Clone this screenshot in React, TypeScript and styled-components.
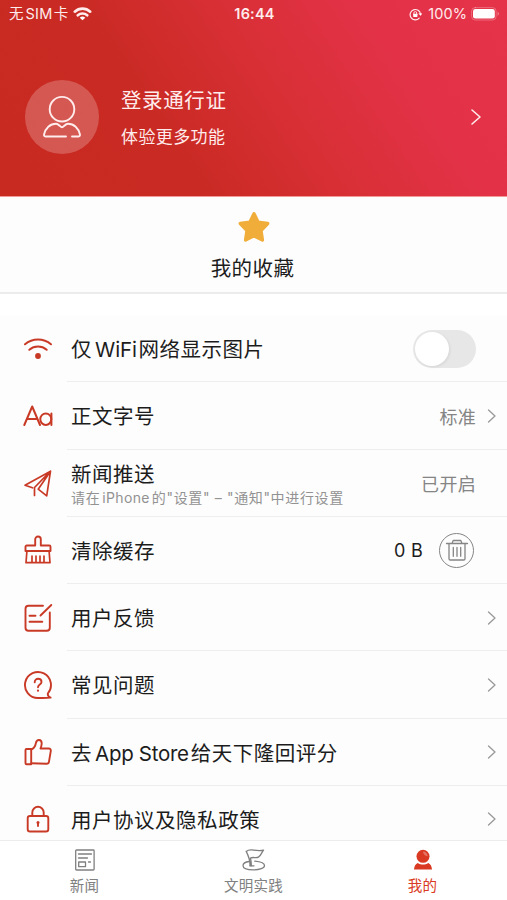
import React from 'react';
import styled, { createGlobalStyle } from 'styled-components';

const GlobalStyle = createGlobalStyle`
  * { box-sizing: border-box; }
  body { margin: 0; background: #fff; }
`;

const Screen = styled.div`
  width: 507px;
  height: 900px;
  overflow: hidden;
  display: flex;
  flex-direction: column;
  background: #fff;
  color: #1c1c1c;
  font-family: Inter, 'Noto Sans CJK SC', sans-serif;
  white-space: nowrap;
`;

const Header = styled.header`
  flex: none;
  height: 196px;
  color: #ffecec;
  background: linear-gradient(56deg, #c82a21 0%, #c92a23 32%, #d82f35 54%, #e33248 77%, #e5334a 100%);
`;

const StatusBar = styled.div`
  height: 28px;
  display: grid;
  grid-template-columns: 1fr auto 1fr;
  align-items: center;
  padding: 0 7px 0 9px;
  font-size: 14.5px;
  line-height: 28px;
`;

const StatusSide = styled.div<{ $end?: boolean }>`
  display: flex;
  align-items: center;
  justify-content: ${(p) => (p.$end ? 'flex-end' : 'flex-start')};
  gap: 5px;
`;

const BatteryLevel = styled.span`
  margin: 0 -1px 0 1px;
  letter-spacing: 0.1px;
`;

const Clock = styled.span`
  font-weight: 600;
  font-size: 14.5px;
  letter-spacing: 0.2px;
`;

const Profile = styled.div`
  height: 173px;
  display: flex;
  align-items: center;
  padding: 5px 25px 0;
`;

const Avatar = styled.div`
  width: 74px;
  height: 74px;
  border-radius: 50%;
  background: rgba(255, 255, 255, 0.22);
  display: flex;
  align-items: center;
  justify-content: center;
`;

const ProfileText = styled.div`
  flex: 1;
  margin-left: 22px;
  padding-top: 3px;
`;

const ProfileTitle = styled.div`
  font-size: 20.5px;
  letter-spacing: 0.6px;
  line-height: 36px;
`;

const ProfileHint = styled.div`
  font-size: 17px;
  letter-spacing: 0.4px;
  line-height: 36px;
`;

const Favorites = styled.section`
  flex: none;
  height: 98px;
  padding-top: 14px;
  display: flex;
  flex-direction: column;
  align-items: center;
  background: #fdfdfd;
  border-top: 1px solid #f29a9a;
  border-bottom: 2px solid #ececec;
`;

const FavoritesLabel = styled.div`
  font-size: 20.5px;
  letter-spacing: 0.4px;
  line-height: 30px;
  margin-top: 11px;
  margin-right: 2px;
`;

const List = styled.main`
  flex: none;
  height: 525px;
  margin-top: 21px;
  overflow: hidden;
  background: #fdfdfd;
`;

const Row = styled.div`
  height: 67.25px;
  display: flex;
  align-items: stretch;
`;

const IconCell = styled.div`
  width: 67px;
  padding-left: 8px;
  display: flex;
  align-items: center;
  justify-content: center;
  color: #c93a26;
`;

const RowBody = styled.div`
  flex: 1;
  display: flex;
  align-items: center;
  padding: 1px 11.5px 0 4px;
  border-bottom: 1px solid #eeeeee;
`;

const RowText = styled.div`
  flex: 1;
  padding-top: 3px;
`;

const Label = styled.div`
  font-size: 20.5px;
  letter-spacing: 0.52px;
  line-height: 28px;
`;

const Hint = styled.div`
  font-size: 14px;
  letter-spacing: 0.65px;
  line-height: 20px;
  margin-top: -1px;
  color: #929292;
`;

const Latin = styled.span<{ $track: number; $before?: number; $after?: number }>`
  letter-spacing: ${(p) => p.$track}px;
  margin-left: ${(p) => p.$before ?? 0}px;
  margin-right: ${(p) => p.$after ?? 0}px;
`;

const Value = styled.span<{ $gap?: number; $dark?: boolean }>`
  font-size: 18px;
  letter-spacing: 0.3px;
  color: ${(p) => (p.$dark ? '#1c1c1c' : '#858585')};
  margin-right: ${(p) => p.$gap ?? 0}px;
`;

const Toggle = styled.div`
  width: 63px;
  height: 38px;
  border-radius: 19px;
  background: #e7e7e7;
  padding: 2px;
  margin-right: 19.5px;
`;

const Knob = styled.div`
  width: 34px;
  height: 34px;
  border-radius: 50%;
  background: #fff;
  box-shadow: 1px 1px 3px rgba(0, 0, 0, 0.08);
`;

const TrashButton = styled.div`
  width: 35px;
  height: 35px;
  border: 1.5px solid #858585;
  border-radius: 50%;
  display: flex;
  align-items: center;
  justify-content: center;
  margin-right: 21.5px;
  color: #858585;
`;

const TabBar = styled.nav`
  flex: none;
  height: 60px;
  display: grid;
  grid-template-columns: repeat(3, 169px);
  background: #fff;
  border-top: 1px solid #ececec;
`;

const Tab = styled.div<{ $active?: boolean }>`
  display: flex;
  flex-direction: column;
  align-items: center;
  padding-top: 7px;
  font-size: 14.5px;
  letter-spacing: 0.2px;
  line-height: 22px;
  color: ${(p) => (p.$active ? '#da3a22' : '#808080')};
  svg { margin-bottom: 3px; }
`;

const Svg = styled.svg`
  display: block;
  flex: none;
  fill: none;
  stroke: currentColor;
  stroke-linecap: round;
  stroke-linejoin: round;
`;

const RowChevron = styled(Svg)`
  color: #999;
`;

const Chevron = () => (
  <RowChevron width="9" height="16" viewBox="0 0 9 16" strokeWidth="1.3">
    <path d="M1.5 2l6.5 6-6.5 6" />
  </RowChevron>
);

const ProfileChevron = () => (
  <Svg width="12" height="18" viewBox="0 0 12 18" strokeWidth="1.6">
    <path d="M2 2l8 7-8 7" />
  </Svg>
);

const WifiStatusIcon = () => (
  <Svg width="19" height="14" viewBox="0 0 19 14" strokeWidth="2.6">
    <path d="M1.8 4.7a11.3 11.3 0 0 1 15.4 0M4.8 8.3a7 7 0 0 1 9.4 0" />
    <path d="M9.5 13.2L6.7 10.8a4.2 4.2 0 0 1 5.6 0z" fill="#fff" stroke="none" />
  </Svg>
);

const LockRotationIcon = () => (
  <Svg width="13" height="13" viewBox="0 0 13 13" strokeWidth="1.2">
    <path d="M10.2 10.2a5.2 5.2 0 1 1 1.3-4" />
    <path d="M10 5.8l1.5 1.8 1.3-1.8z" fill="#fff" strokeWidth=".5" />
    <path d="M4.9 6V5a1.4 1.4 0 0 1 2.8 0v1" strokeWidth=".9" />
    <rect x="4.2" y="5.8" width="4.2" height="3.2" rx=".4" fill="#fff" stroke="none" />
  </Svg>
);

const BatteryIcon = () => (
  <Svg width="29" height="14" viewBox="0 0 29 14">
    <rect x=".6" y=".6" width="24.5" height="12.4" rx="3.6" strokeOpacity=".3" />
    <rect x="2" y="2" width="21.8" height="9.6" rx="2.4" fill="#fff" stroke="none" />
    <path d="M26.6 4.8c1.7.6 1.7 3.4 0 4z" fill="#fff" fillOpacity=".4" stroke="none" />
  </Svg>
);

const AvatarIcon = () => (
  <Svg width="42" height="44" viewBox="0 0 42 44" strokeWidth="1.9">
    <circle cx="21" cy="14.2" r="12.3" />
    <path d="M25 41.5H4.500c-1.300 0-1.700-.9-1.400-2.200C4.500 33.200 9 28.700 15 28.700c2.700 0 4.300 3.600 6 3.600s3.300-3.600 6-3.600c6 0 10.500 4.500 11.900 10.600.3 1.300-.1 2.200-1.400 2.200h-6.500" />
  </Svg>
);

const StarIcon = () => (
  <Svg width="34" height="32" viewBox="0 0 34 32">
    <path d="M17 2.700l4 8.400 9.700 1.400-6.700 7 1.400 9.500-8.400-4.200-8.400 4.200 1.400-9.500-6.700-7 9.700-1.400z" fill="#f1ad3a" stroke="#f1ad3a" strokeWidth="3.400" />
  </Svg>
);

const WifiIcon = () => (
  <Svg width="30" height="30" viewBox="0 0 30 30" strokeWidth="2">
    <path d="M2 10.300a20 20 0 0 1 26 0M6.300 15.800a13.500 13.500 0 0 1 17.400 0" />
    <circle cx="15" cy="22" r="2.900" fill="currentColor" stroke="none" />
  </Svg>
);

const LetterIcon = () => (
  <Svg width="30" height="30" viewBox="0 0 30 30" strokeWidth="2">
    <path d="M1.300 24L9.200 5.500 17 24M4.200 18h9.900M28.400 12.500V24" />
    <ellipse cx="22.800" cy="18.200" rx="5.500" ry="5.700" />
  </Svg>
);

const PlaneIcon = () => (
  <Svg width="30" height="30" viewBox="0 0 30 30" strokeWidth="1.700">
    <path d="M27.500 3.200L2 17.200l7.500 2.600M27.500 3.200L23.700 27.800 15.200 21.200 27.500 3.200 11.500 19.500v8" />
  </Svg>
);

const BroomIcon = () => (
  <Svg width="30" height="30" viewBox="0 0 30 30" strokeWidth="1.900">
    <path d="M12.200 10.500V4.300a2.800 2.800 0 0 1 5.600 0v6.200h8.500a1.200 1.200 0 0 1 1.200 1.200v4.300H2.500v-4.300a1.200 1.200 0 0 1 1.200-1.200z" />
    <path d="M3.900 16.300L3 27.700h24L26.100 16.300M9 21v6M13 21v6M17 21v6M21 21v6" strokeWidth="1.700" />
  </Svg>
);

const FeedbackIcon = () => (
  <Svg width="30" height="30" viewBox="0 0 30 30" strokeWidth="1.900">
    <path d="M20 2.700H5.500a3 3 0 0 0-3 3v19a3 3 0 0 0 3 3h18.300a3 3 0 0 0 3-3V9.500M28.300 2L17.500 12.500M6.500 12.800h6M6.500 18.700h12.800" />
  </Svg>
);

const QuestionIcon = () => (
  <Svg width="30" height="30" viewBox="0 0 30 30" strokeWidth="1.900">
    <path d="M15 28a13 13 0 1 1 9.800-4.500c-.2 2 .6 3.300 2.800 4.100-3.500.6-8.600.4-12.600.4z" />
    <path d="M11.700 12.200c0-4.700 6.800-4.300 6.800-.3 0 2.700-3.500 2.600-3.500 5.400" />
    <circle cx="15" cy="20.700" r="1.100" fill="currentColor" stroke="none" />
  </Svg>
);

const ThumbIcon = () => (
  <Svg width="30" height="30" viewBox="0 0 30 30" strokeWidth="1.900">
    <path d="M2.500 13a1 1 0 0 1 1-1h4.700v15.200H3.500a1 1 0 0 1-1-1z" />
    <path d="M8.200 12.500c3.500-1 4.300-4.200 4.800-6.700.8-4 5.700-3.800 5.700.5 0 2.200-.5 3.500-1.200 5.200h8.300a2 2 0 0 1 2 2.300l-1.800 10.900c-.2 1.300-1 2-2.300 2L8.200 26.200" />
  </Svg>
);

const LockIcon = () => (
  <Svg width="30" height="30" viewBox="0 0 30 30" strokeWidth="1.900">
    <rect x="4.700" y="12" width="20.600" height="15.500" rx="2.300" />
    <path d="M9.300 12V8.500a5.700 5.700 0 0 1 11.400 0V12M15 19.300v2.700" />
    <circle cx="15" cy="18.600" r="1.500" fill="currentColor" stroke="none" />
  </Svg>
);

const TrashIcon = () => (
  <Svg width="24" height="24" viewBox="0 0 24 24" strokeWidth="1.300">
    <path d="M1.500 5.500h21M7 5.500l1.200-3h7.600l1.200 3M4 5.800v14.900c0 .8.500 1.300 1.300 1.300h13.400c.8 0 1.300-.5 1.300-1.300V5.800M8.300 9.500v8.800M12 9.500v8.800M15.700 9.500v8.800" />
  </Svg>
);

const NewsIcon = () => (
  <Svg width="24" height="24" viewBox="0 0 24 24" strokeWidth="1.300">
    <rect x="2.700" y="2" width="18.400" height="20" rx=".8" />
    <path d="M5.500 6h13M5.500 10h9M5.700 14h6.800v4.700H5.700zM15.500 14h2" />
  </Svg>
);

const FlagIcon = () => (
  <Svg width="26" height="24" viewBox="0 0 26 24" strokeWidth="1.300">
    <path d="M5.200 3.400c4.500-4 9 .8 17.400-1.300-2.200 2.300-2.200 5.300-5.200 7-2.700 1.500-4.900-.6-8 1M5.200 3.400c2.300 4.500 4 9 3.800 14.300M9.400 10.100c.8 2.700 1 5 .9 7.600" />
    <path d="M8.300 13.500C4 14 2 15.600 2 17.500c0 2.600 4.300 4.400 10.500 4.400s11-1.800 11-4.400c0-2.300-3.700-3.900-9.700-4.400M9 17.800h4" />
  </Svg>
);

const PersonIcon = () => (
  <Svg width="24" height="24" viewBox="0 0 24 24">
    <circle cx="12" cy="8.300" r="6.500" fill="currentColor" stroke="none" />
    <path d="M6.800 14.900c3 2.100 7.400 2.100 10.400 0 2.200.9 3.600 3.200 3.800 6.600H3c.2-3.400 1.600-5.700 3.800-6.600z" fill="currentColor" stroke="none" />
    <path d="M12 3.500a4.700 4.700 0 0 1 4.700 4.700c-2.700 0-4.700-2-4.700-4.700z" fill="#fff" fillOpacity=".3" stroke="none" />
  </Svg>
);

interface Item {
  icon: React.ReactNode;
  label: React.ReactNode;
  hint?: React.ReactNode;
  end: React.ReactNode;
}

const items: Item[] = [
  {
    icon: <WifiIcon />,
    label: <>仅<Latin $track={-0.1} $before={3} $after={1.5}>WiFi</Latin>网络显示图片</>,
    end: <Toggle><Knob /></Toggle>,
  },
  { icon: <LetterIcon />, label: '正文字号', end: <><Value $gap={10.5}>标准</Value><Chevron /></> },
  {
    icon: <PlaneIcon />,
    label: '新闻推送',
    hint: <>请在<Latin $track={0.35} $before={2} $after={2}>iPhone</Latin>的"设置" – "通知"中进行设置</>,
    end: <Value $gap={19.5}>已开启</Value>,
  },
  { icon: <BroomIcon />, label: '清除缓存', end: <><Value $dark $gap={16}>0 B</Value><TrashButton><TrashIcon /></TrashButton></> },
  { icon: <FeedbackIcon />, label: '用户反馈', end: <Chevron /> },
  { icon: <QuestionIcon />, label: '常见问题', end: <Chevron /> },
  {
    icon: <ThumbIcon />,
    label: <>去<Latin $track={-0.3} $before={3} $after={2}>App Store</Latin>给天下隆回评分</>,
    end: <Chevron />,
  },
  { icon: <LockIcon />, label: '用户协议及隐私政策', end: <Chevron /> },
];

export default function App() {
  return (
    <Screen>
      <GlobalStyle />
      <Header>
        <StatusBar>
          <StatusSide><span>无<Latin $track={0.3} $before={2} $after={1}>SIM</Latin>卡</span><WifiStatusIcon /></StatusSide>
          <Clock>16:44</Clock>
          <StatusSide $end><LockRotationIcon /><BatteryLevel>100%</BatteryLevel><BatteryIcon /></StatusSide>
        </StatusBar>
        <Profile>
          <Avatar><AvatarIcon /></Avatar>
          <ProfileText>
            <ProfileTitle>登录通行证</ProfileTitle>
            <ProfileHint>体验更多功能</ProfileHint>
          </ProfileText>
          <ProfileChevron />
        </Profile>
      </Header>
      <Favorites>
        <StarIcon />
        <FavoritesLabel>我的收藏</FavoritesLabel>
      </Favorites>
      <List>
        {items.map((item, i) => (
          <Row key={i}>
            <IconCell>{item.icon}</IconCell>
            <RowBody>
              <RowText>
                <Label>{item.label}</Label>
                {item.hint && <Hint>{item.hint}</Hint>}
              </RowText>
              {item.end}
            </RowBody>
          </Row>
        ))}
      </List>
      <TabBar>
        <Tab><NewsIcon />新闻</Tab>
        <Tab><FlagIcon />文明实践</Tab>
        <Tab $active><PersonIcon />我的</Tab>
      </TabBar>
    </Screen>
  );
}
